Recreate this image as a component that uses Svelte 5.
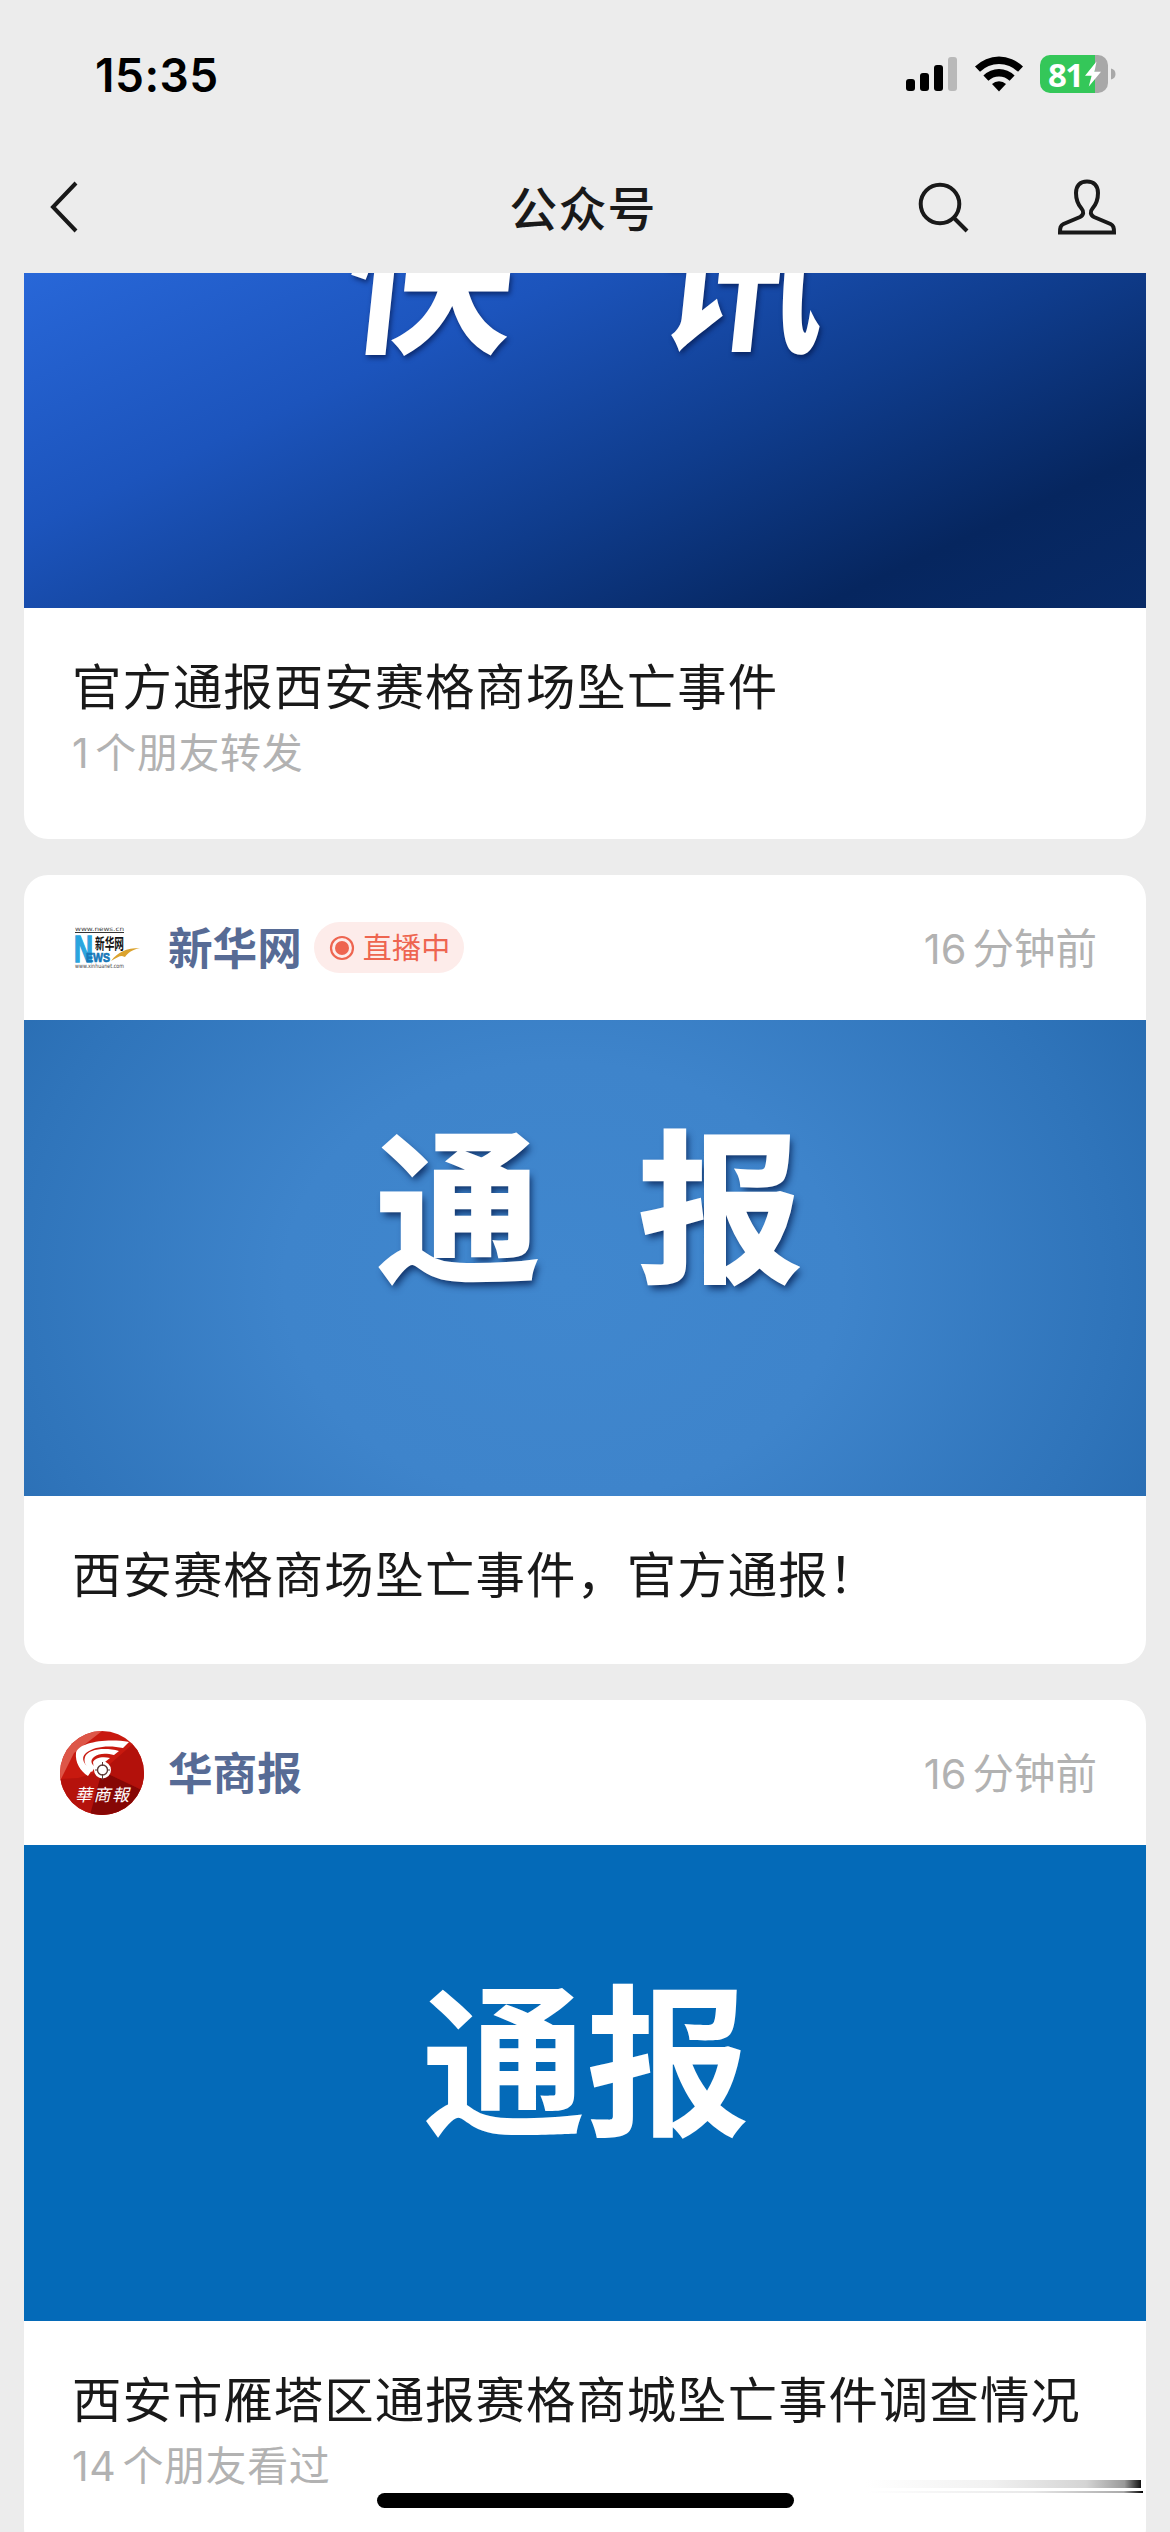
<script lang="ts">
	type Post = {
		account?: string;
		avatar?: 'xinhua' | 'huashang';
		live?: boolean;
		minutes?: number;
		cover: string;
		words: string[];
		title: string;
		count?: number;
		action?: string;
	};

	const posts: Post[] = [
		{
			cover: 'flash',
			words: ['快', '讯'],
			title: '官方通报西安赛格商场坠亡事件',
			count: 1,
			action: '个朋友转发'
		},
		{
			account: '新华网',
			avatar: 'xinhua',
			live: true,
			minutes: 16,
			cover: 'notice',
			words: ['通', '报'],
			title: '西安赛格商场坠亡事件，官方通报！'
		},
		{
			account: '华商报',
			avatar: 'huashang',
			minutes: 16,
			cover: 'flat',
			words: ['通', '报'],
			title: '西安市雁塔区通报赛格商城坠亡事件调查情况',
			count: 14,
			action: '个朋友看过'
		}
	];
</script>

<div class="screen">
	<header>
		<div class="status-bar">
			<span class="clock">15:35</span>
			<div class="status-icons">
				<svg class="signal" width="52" height="35" viewBox="0 0 52 35">
					<rect x="0" y="23" width="9" height="12" rx="3" />
					<rect x="14" y="17" width="9" height="18" rx="3" />
					<rect x="28" y="9" width="9" height="26" rx="3" />
					<rect x="42" y="1" width="9" height="34" rx="3" fill="#b9b9b9" />
				</svg>
				<svg class="wifi" width="50" height="37" viewBox="0 0 50 37">
					<path d="M1 11.500a34 34 0 0 1 48 0l-5 5.300a27 27 0 0 0-38 0z" />
					<path d="M9.400 20.500a22 22 0 0 1 31.200 0l-5 5.200a15.200 15.200 0 0 0-21.200 0z" />
					<path d="M18 29a10 10 0 0 1 14 0L25 36.500z" />
				</svg>
				<div class="battery">
					<div class="battery-body">
						<span>81</span>
						<svg width="18" height="26" viewBox="0 0 18 26">
							<path d="M12.500 0.500 1 14.800h6.600L4.800 25.500 17 10.800h-6.500z" fill="#fff" />
						</svg>
					</div>
					<svg width="5" height="12" viewBox="0 0 5 12">
						<path d="M0 0.500C2.800 1 4.500 3 4.500 6S2.800 11 0 11.500z" fill="#a8a8a8" />
					</svg>
				</div>
			</div>
		</div>

		<nav>
			<button class="back" aria-label="返回">
				<svg width="30" height="54" viewBox="0 0 30 54">
					<path d="M27 3 4 27l23 24" />
				</svg>
			</button>
			<h1>公众号</h1>
			<div class="actions">
				<button aria-label="搜索">
					<svg width="52" height="52" viewBox="0 0 52 52">
						<circle cx="22" cy="23" r="19.300" />
						<path d="M35.500 36.500 49 50" />
					</svg>
				</button>
				<button aria-label="我">
					<svg width="60" height="58" viewBox="0 0 60 58">
						<path
							d="M30 3.500c-7.200 0-11 4.500-11 11.500 0 6.500 2 11.500 5.500 15.500 2.600 3 2.300 6.500-1.500 8.500L6.500 46C3.500 47.500 3 49.500 3 54.500h54c0-5-.5-7-3.500-8.500L37 39c-3.800-2-4.100-5.500-1.500-8.500C39 26.500 41 21.500 41 15c0-7-3.800-11.500-11-11.500z"
						/>
					</svg>
				</button>
			</div>
		</nav>
	</header>

	<main>
		{#each posts as post}
			<article>
				{#if post.account}
					<div class="source">
						<div class="avatar">
							{#if post.avatar === 'xinhua'}
								<svg width="84" height="84" viewBox="0 0 84 84">
									<text class="url" x="15" y="24.500" textLength="49" lengthAdjust="spacingAndGlyphs">www.news.cn</text>
									<path d="M15 26.500h49" stroke="#333" stroke-width="1" />
									<text class="big-n" x="14" y="56" textLength="19" lengthAdjust="spacingAndGlyphs">N</text>
									<text class="ews" x="26" y="56" textLength="24" lengthAdjust="spacingAndGlyphs">EWS</text>
									<text class="cn" x="35" y="42.500" textLength="29" lengthAdjust="spacingAndGlyphs">新华网</text>
									<path d="M51 55c7-9 15-13 29-13-9 2-12 5-15 9l-3-1c-3 0-6 2-11 5z" fill="#dba32e" />
									<text class="url" x="15" y="62" textLength="49" lengthAdjust="spacingAndGlyphs">www.xinhuanet.com</text>
								</svg>
							{:else}
								<svg width="84" height="84" viewBox="0 0 84 84">
									<defs>
										<clipPath id="disc"><circle cx="42" cy="42" r="42" /></clipPath>
									</defs>
									<g clip-path="url(#disc)">
										<rect width="84" height="84" fill="#c8190f" />
										<path d="M0 0h42L14 22 0 50z" fill="#dd5648" />
										<path d="M0 48 18 47 42 40 60 84H0z" fill="#b5120c" />
										<path d="M42 40 74 12 84 20v40z" fill="#b3110b" />
										<path d="M42 40 84 60v24H30z" fill="#860705" />
									</g>
									<g fill="#fff">
										<path d="M69 11C45 7 18 12 16 22c-1 9 4 18 12 23l4-6c-8-5-12-12-6-17 8-7 24-8 37-5z" />
										<path d="M59 20c-14-4-31-2-34 6-2 6 2 11 7 15l3-5c-4-3-5-7-1-10 5-4 12-4 20-2z" />
										<path d="M50 27c-8-2-15 0-17 4l1 8 5-5 6-3z" />
										<circle cx="42.500" cy="39" r="8.500" />
									</g>
									<circle cx="42.500" cy="39" r="5" fill="none" stroke="#5b3a36" stroke-width="1.400" />
									<path d="M42.500 31v4M42.500 43v6M35 39h3M47 39h3" stroke="#5b3a36" stroke-width="1" />
									<text class="brush" x="15" y="70" textLength="54">華商報</text>
								</svg>
							{/if}
						</div>
						<span class="name">{post.account}</span>
						{#if post.live}
							<span class="live">
								<svg width="26" height="26" viewBox="0 0 26 26">
									<circle cx="13" cy="13" r="11" fill="none" stroke="currentColor" stroke-width="2.200" />
									<circle cx="13" cy="13" r="7" fill="currentColor" />
								</svg>
								<span>直播中</span>
							</span>
						{/if}
						<span class="time"><span class="num">{post.minutes}</span>分钟前</span>
					</div>
				{/if}

				<div class="cover {post.cover}">
					{#each post.words as word}
						<span>{word}</span>
					{/each}
				</div>

				<div class="caption">
					<h2>{post.title}</h2>
					{#if post.count}
						<p><span class="num">{post.count}</span>{post.action}</p>
					{/if}
				</div>
			</article>
		{/each}
	</main>

	<div class="smear"></div>
	<div class="home-indicator"></div>
</div>

<style>
	:global(body) {
		margin: 0;
		background: #ececec;
	}

	.screen {
		position: relative;
		display: flex;
		flex-direction: column;
		width: 1170px;
		height: 2532px;
		overflow: hidden;
		background: #ececec;
		color: #191919;
		font-family: Inter, 'Noto Sans CJK SC', sans-serif;
	}

	header {
		flex: none;
		height: 273px;
	}

	.status-bar {
		display: flex;
		justify-content: space-between;
		align-items: center;
		height: 150px;
		padding: 0 54px 0 95px;
		box-sizing: border-box;
	}

	.clock {
		color: #000;
		font-size: 46px;
		font-weight: 600;
		letter-spacing: 0.5px;
	}

	.status-icons {
		display: flex;
		align-items: center;
		gap: 16px;
		margin-bottom: 2px;
	}

	.signal {
		margin-bottom: 1px;
	}

	.wifi {
		margin-bottom: 2px;
	}

	.battery {
		display: flex;
		align-items: center;
		gap: 3px;
	}

	.battery-body {
		display: flex;
		align-items: center;
		gap: 1px;
		width: 68px;
		height: 38px;
		padding-left: 8px;
		box-sizing: border-box;
		border-radius: 10px;
		background: linear-gradient(90deg, #34c759 81%, #a8a8a8 81%);
		color: #fff;
		font: 700 33px 'Open Sans', sans-serif;
		letter-spacing: -1.500px;
	}

	nav {
		display: flex;
		align-items: center;
		justify-content: space-between;
		height: 114px;
		padding: 0 53px 0 49px;
	}

	nav svg {
		display: block;
		fill: none;
		stroke: #191919;
		stroke-width: 4;
	}

	button {
		padding: 0;
		border: 0;
		background: none;
	}

	.back {
		flex: 1;
	}

	h1 {
		margin: 0 0 3px;
		font-size: 48px;
		font-weight: 500;
		letter-spacing: 1.200px;
	}

	.actions {
		display: flex;
		flex: 1;
		align-items: center;
		justify-content: flex-end;
		gap: 87px;
	}

	main {
		display: flex;
		flex-direction: column;
		gap: 36px;
		padding: 0 24px;
	}

	article {
		flex: none;
		overflow: hidden;
		border-radius: 24px;
		background: #fff;
	}

	article:first-child {
		border-radius: 0 0 24px 24px;
	}

	.source {
		display: flex;
		align-items: center;
		height: 145px;
		padding: 0 49px 0 36px;
	}

	.avatar {
		width: 84px;
		height: 84px;
		margin-right: 24px;
	}

	.avatar svg {
		display: block;
	}

	.url {
		fill: #444;
		font: 6px 'DejaVu Sans', sans-serif;
	}

	.big-n {
		fill: #2aa5de;
		stroke: #2aa5de;
		stroke-width: 1.500px;
		font: 700 37px 'Liberation Sans', sans-serif;
	}

	.ews {
		fill: #1677b8;
		stroke: #1677b8;
		stroke-width: 0.700px;
		font: 700 13px 'Liberation Sans', sans-serif;
	}

	.cn {
		fill: #111;
		font: 700 15px 'Noto Sans CJK SC', sans-serif;
	}

	.brush {
		fill: #fff;
		font: italic 17px 'Noto Sans CJK TC', sans-serif;
	}

	.name {
		margin-bottom: 4px;
		color: #576b95;
		font-size: 44.600px;
		font-weight: 700;
	}

	.live {
		display: flex;
		align-items: center;
		gap: 8px;
		height: 51px;
		margin-left: 12px;
		padding: 0 14px 0 15px;
		border-radius: 26px;
		background: #fdecea;
		color: #ee6550;
		font-size: 29px;
	}

	.live span {
		margin-bottom: 3px;
		letter-spacing: 0.200px;
	}

	.time {
		margin-bottom: 4px;
		margin-left: auto;
		color: #b2b2b2;
		font-size: 41.500px;
	}

	.num {
		margin-right: 6px;
	}

	.cover {
		display: flex;
		justify-content: center;
		height: 476px;
		color: #fff;
		font-weight: 700;
		font-size: 164px;
		line-height: 1;
	}

	.flash {
		gap: 144px;
		height: 335px;
		padding-right: 20px;
		box-sizing: border-box;
		background: linear-gradient(155deg, #2867d8 0%, #1c54bc 30%, #0f3c8c 58%, #06265f 82%, #082a66 100%);
		font-size: 168px;
	}

	.flash span {
		margin-top: -78px;
		transform: skewX(-6deg);
		text-shadow: 2px 3px 5px rgba(0, 15, 60, 0.6);
	}

	.notice {
		gap: 98px;
		padding: 108px 0 0 8px;
		box-sizing: border-box;
		background: radial-gradient(ellipse 62% 115% at 48% 55%, #4087ce 0%, #3e84cb 40%, #2f74ba 80%, #276bb0 100%);
	}

	.notice span {
		-webkit-text-stroke: 2.500px #fff;
		text-shadow: 3px 5px 7px rgba(5, 30, 80, 0.8);
	}

	.flat {
		padding: 137px 0 0 2px;
		box-sizing: border-box;
		background: #046ab8;
	}

	.caption {
		height: 168px;
		padding: 44px 48px 0;
		box-sizing: border-box;
	}

	.caption:has(p) {
		height: 231px;
	}

	h2 {
		margin: 0;
		font-size: 49.400px;
		font-weight: 400;
		line-height: 70px;
		letter-spacing: 1.050px;
		white-space: nowrap;
	}

	p {
		margin: 0;
		color: #b2b2b2;
		font-size: 41px;
		line-height: 62px;
		letter-spacing: 0.600px;
	}

	.smear {
		position: absolute;
		top: 2480px;
		left: 866px;
		width: 275px;
		height: 8px;
		background: linear-gradient(90deg, transparent, #f1f1f1 45%, #d4d4d4 80%, #999 94%, #111);
	}

	.smear::after {
		content: '';
		position: absolute;
		top: 11px;
		right: -2px;
		width: 276px;
		height: 2px;
		background: linear-gradient(90deg, transparent, #e8e8e8 60%, #aaa 93%, #000);
	}

	.home-indicator {
		position: absolute;
		bottom: 24px;
		left: 377px;
		width: 417px;
		height: 15px;
		border-radius: 8px;
		background: #000;
	}
</style>
